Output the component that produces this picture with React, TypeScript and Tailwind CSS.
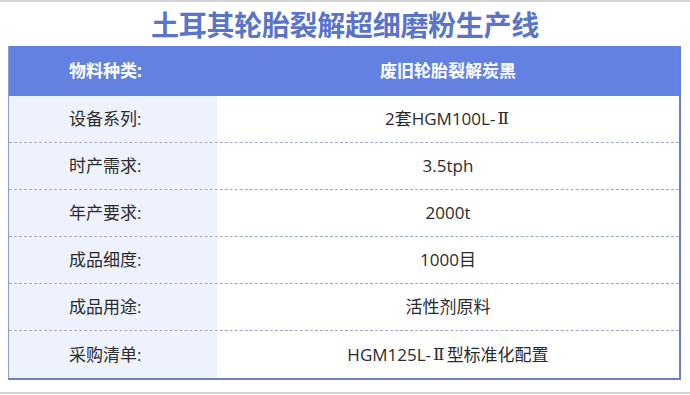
import React from "react";

const R = () => (
  <span className="mx-[2px]" style={{ fontFamily: '"DejaVu Serif", serif' }}>
    Ⅱ
  </span>
);

const rows: [string, React.ReactNode][] = [
  ["设备系列:", <>2套HGM100L-<R /></>],
  ["时产需求:", "3.5tph"],
  ["年产要求:", "2000t"],
  ["成品细度:", "1000目"],
  ["成品用途:", "活性剂原料"],
  ["采购清单:", <>HGM125L-<R />型标准化配置</>],
];

export default function App() {
  return (
    <div
      className="w-[690px] h-[395px] bg-white flex flex-col overflow-hidden"
      style={{ fontFamily: '"Open Sans", "Noto Sans CJK SC", sans-serif' }}
    >
      <div className="h-[2px] bg-[#d4d4d4]" />
      <div className="h-[44px] flex items-center justify-center">
        <h1
          className="text-[28px] leading-none font-bold text-[#5a74c9] tracking-[-0.3px]"
          style={{ fontFamily: '"Noto Sans CJK SC", sans-serif' }}
        >
          土耳其轮胎裂解超细磨粉生产线
        </h1>
      </div>
      <div className="ml-[8px] w-[673px] border-l border-r-2 border-b-2 border-[#6b7ec9] border-l-[#8f9ccf]">
        <div className="flex h-[50px] bg-[#6281e0] text-white font-bold text-[17px]">
          <div className="w-[208px] pl-[60px] flex items-center">物料种类:</div>
          <div className="flex-1 flex items-center justify-center">废旧轮胎裂解炭黑</div>
        </div>
        {rows.map(([k, v], i) => (
          <div
            key={k}
            className={`flex h-[47px] text-[17px] text-[#2b2b2b] ${
              i < rows.length - 1 ? "border-b border-dashed border-[#9fa7c9]" : ""
            }`}
          >
            <div className="w-[208px] pl-[60px] flex items-center bg-[#eef2fc]">{k}</div>
            <div className="flex-1 flex items-center justify-center bg-white">{v}</div>
          </div>
        ))}
      </div>
      <div className="flex-1" />
      <div className="h-[2px] bg-[#d4d4d4] mb-[1px]" />
    </div>
  );
}
